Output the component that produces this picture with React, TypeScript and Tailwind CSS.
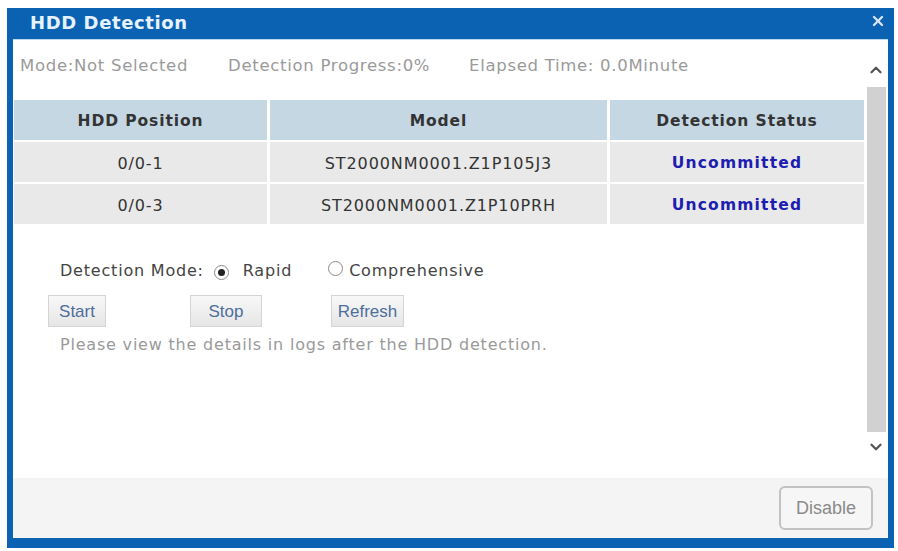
import { X, ChevronUp, ChevronDown } from "lucide-react";

const ROWS = [
  { pos: "0/0-1", model: "ST2000NM0001.Z1P105J3", status: "Uncommitted" },
  { pos: "0/0-3", model: "ST2000NM0001.Z1P10PRH", status: "Uncommitted" },
];

function Radio({ checked }: { checked?: boolean }) {
  return (
    <span className="inline-flex items-center justify-center w-[15px] h-[15px] rounded-full border border-[#8a8a8a] bg-white">
      {checked && <span className="w-[7px] h-[7px] rounded-full bg-[#222]" />}
    </span>
  );
}

function Btn({ label, w }: { label: string; w: string }) {
  return (
    <button
      className={`${w} h-[32px] border border-[#d4d4d4] bg-gradient-to-b from-[#f8f8f8] to-[#e6e6e6] text-[#4d6e9c] text-[17px] font-['Liberation_Sans'] pt-[2px]`}
    >
      {label}
    </button>
  );
}

export default function App() {
  return (
    <div className="w-[898px] h-[551px] bg-white pt-[8px] pl-[7px] font-['DejaVu_Sans'] tracking-[0.8px]">
      <div className="w-[887px] h-[540px] bg-[#0b62b3] flex flex-col px-[6px] pb-[10px]">
        {/* title bar */}
        <div className="h-[31px] flex items-center justify-between pl-[17px] pr-[3px] pb-[3px]">
          <span className="text-[#e6f2ff] font-bold text-[18px] tracking-[0.6px]">HDD Detection</span>
          <X className="w-[16px] h-[16px] text-[#d8e4f4] -mt-[3px] mr-[-1px]" strokeWidth={3.5} />
        </div>

        <div className="flex-1 flex flex-col bg-white border-t border-[#bcd9f2]">
          <div className="flex-1 flex">
            {/* main */}
            <div className="flex-1 pl-[1px]">
              <div className="h-[60px] flex items-center text-[16.5px] tracking-[0.7px] text-[#9a9a9a] pl-[6px] pb-[7px]">
                <span className="w-[208px]">Mode:Not Selected</span>
                <span className="w-[241px]">Detection Progress:0%</span>
                <span>Elapsed Time: 0.0Minute</span>
              </div>

              <div className="grid grid-cols-[253px_337px_254px] gap-x-[3px] text-[16px] tracking-[0.9px] text-[#333] text-center">
                <div className="h-[40px] pt-[3px] flex items-center justify-center bg-[#c6d7e4] font-bold text-[15.5px]">HDD Position</div>
                <div className="h-[40px] pt-[3px] flex items-center justify-center bg-[#c6d7e4] font-bold text-[15.5px]">Model</div>
                <div className="h-[40px] pt-[3px] flex items-center justify-center bg-[#c6d7e4] font-bold text-[15.5px]">Detection Status</div>
                {ROWS.map((r) => (
                  <div key={r.pos} className="contents">
                    <div className="h-[40px] mt-[2px] pt-[3px] flex items-center justify-center bg-[#e9e9e9]">{r.pos}</div>
                    <div className="h-[40px] mt-[2px] pt-[3px] flex items-center justify-center bg-[#e9e9e9]">{r.model}</div>
                    <div className="h-[40px] mt-[2px] pt-[3px] flex items-center justify-center bg-[#e9e9e9] font-bold text-[15.5px] tracking-[1.2px] text-[#1d1db0]">
                      {r.status}
                    </div>
                  </div>
                ))}
              </div>

              <div className="pl-[46px] mt-[35px] flex items-center text-[16px] text-[#444]">
                <span>Detection Mode:</span>
                <span className="ml-[10px]"><Radio checked /></span>
                <span className="ml-[14px]">Rapid</span>
                <span className="ml-[36px]"><Radio /></span>
                <span className="ml-[6px]">Comprehensive</span>
              </div>

              <div className="pl-[34px] mt-[12px] flex tracking-normal">
                <Btn label="Start" w="w-[58px]" />
                <span className="ml-[84px]"><Btn label="Stop" w="w-[72px]" /></span>
                <span className="ml-[69px]"><Btn label="Refresh" w="w-[73px]" /></span>
              </div>

              <p className="pl-[46px] mt-[6px] text-[16px] text-[#9a9a9a]">
                Please view the details in logs after the HDD detection.
              </p>
            </div>

            {/* scrollbar */}
            <div className="w-[24px] flex flex-col items-center pt-[21px] pb-[22px]">
              <ChevronUp className="w-[18px] h-[18px] text-[#555]" strokeWidth={3} />
              <div className="w-[19px] flex-1 bg-[#d1d1d1] mt-[8px] mb-[6px]" />
              <ChevronDown className="w-[18px] h-[18px] text-[#555]" strokeWidth={3} />
            </div>
          </div>

          {/* footer */}
          <div className="h-[60px] bg-[#f4f4f4] flex items-center justify-end pr-[15px] tracking-normal">
            <button className="w-[94px] h-[44px] rounded-[6px] border-2 border-[#c2c2c2] bg-[#f6f6f6] text-[#8a8a8a] text-[18px] font-['Liberation_Sans']">
              Disable
            </button>
          </div>
        </div>
      </div>
    </div>
  );
}
